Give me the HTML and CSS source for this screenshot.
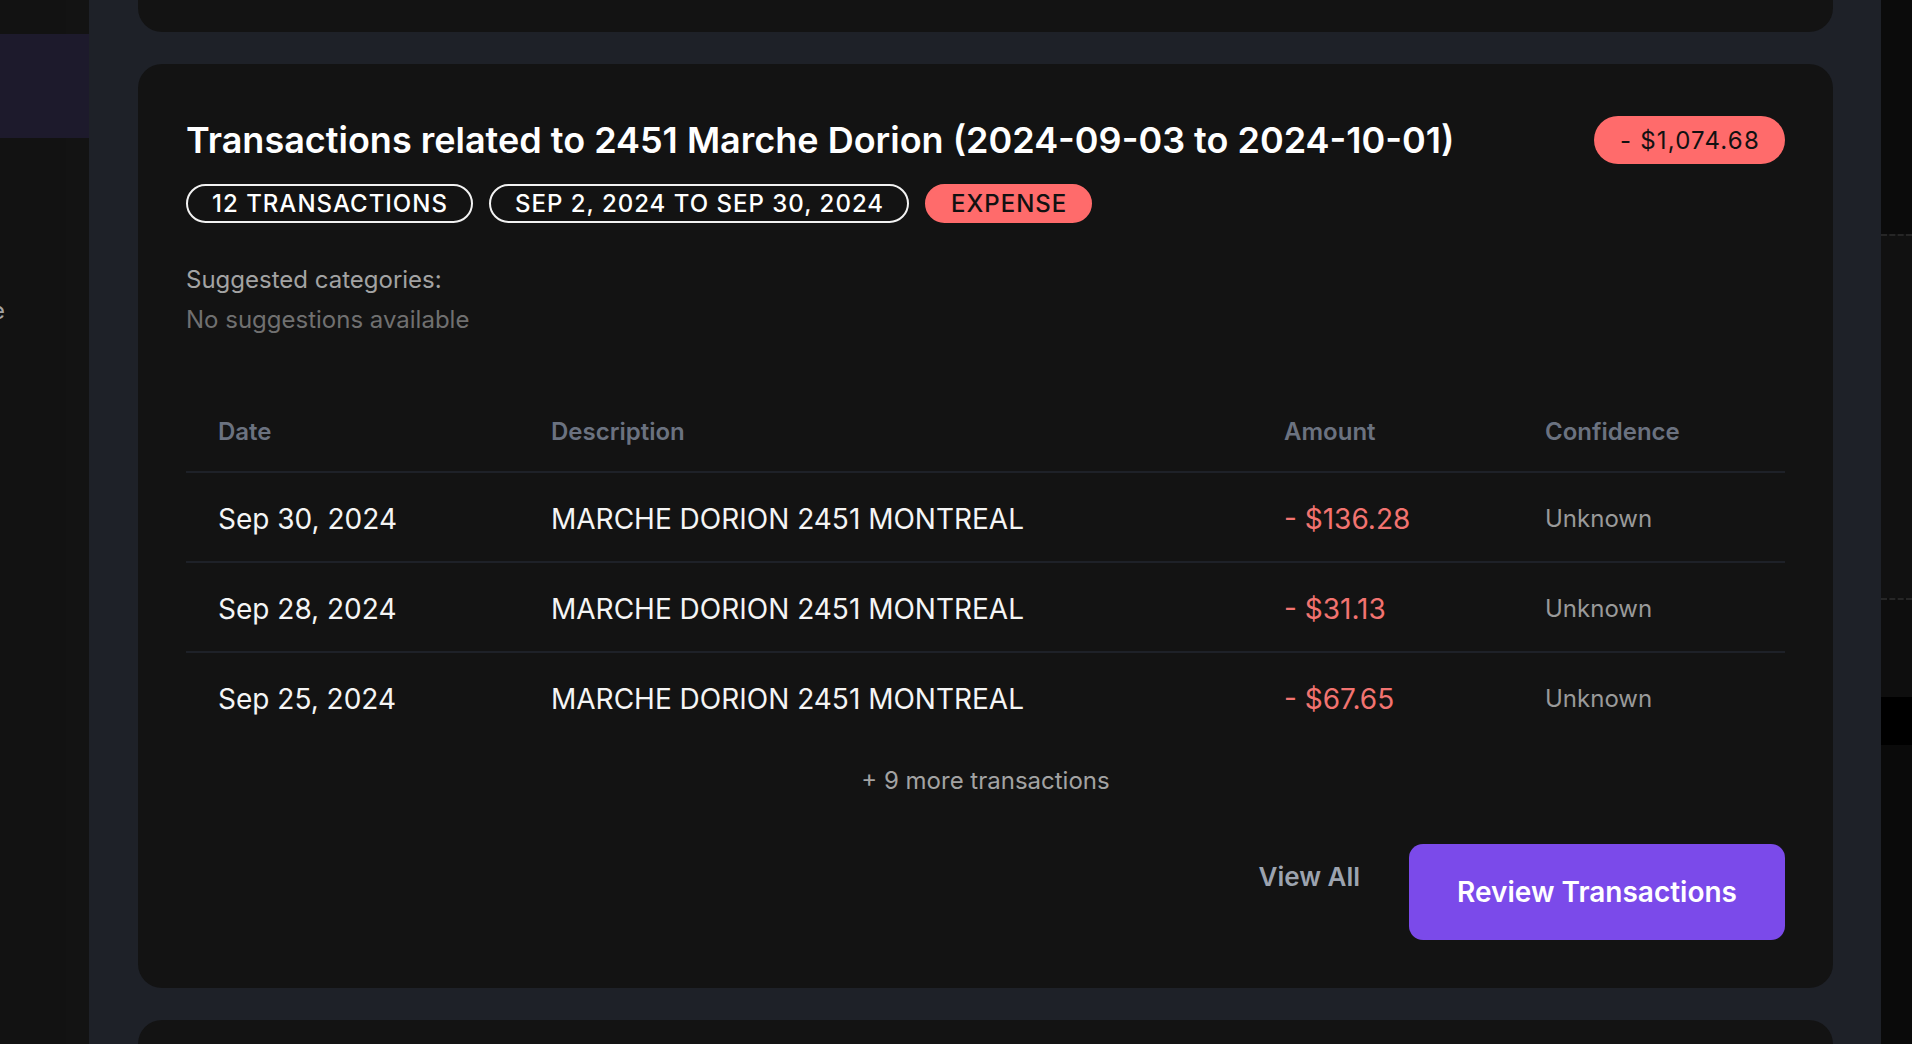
FILE: index.html
```html
<!DOCTYPE html>
<html lang="en">
<head>
<meta charset="utf-8">
<title>Transactions</title>
<link rel="stylesheet" href="styles.css">
</head>
<body>
<div class="app">
  <aside class="sidebar">
    <div class="nav-top"></div>
    <div class="nav-active"></div>
    <div class="nav-item"><span class="nav-label">Rule</span></div>
  </aside>
  <main class="main">
    <div class="feed">
      <section class="card card-prev"></section>
      <section class="card">
        <div class="card-head">
          <h2 class="card-title">Transactions related to 2451 Marche Dorion (2024-09-03 to 2024-10-01)</h2>
          <span class="total-pill">- $1,074.68</span>
        </div>
        <div class="chips">
          <span class="chip">12 Transactions</span>
          <span class="chip">Sep 2, 2024 to Sep 30, 2024</span>
          <span class="chip chip-expense">Expense</span>
        </div>
        <div class="suggest">
          <div class="suggest-label">Suggested categories:</div>
          <div class="suggest-empty">No suggestions available</div>
        </div>
        <table class="tx-table">
          <colgroup>
            <col class="c-date"><col class="c-desc"><col class="c-amt"><col class="c-conf">
          </colgroup>
          <thead>
            <tr><th>Date</th><th>Description</th><th>Amount</th><th>Confidence</th></tr>
          </thead>
          <tbody>
            <tr><td>Sep 30, 2024</td><td>MARCHE DORION 2451 MONTREAL</td><td class="amount">- $136.28</td><td class="conf">Unknown</td></tr>
            <tr><td>Sep 28, 2024</td><td>MARCHE DORION 2451 MONTREAL</td><td class="amount">- $31.13</td><td class="conf">Unknown</td></tr>
            <tr><td>Sep 25, 2024</td><td>MARCHE DORION 2451 MONTREAL</td><td class="amount">- $67.65</td><td class="conf">Unknown</td></tr>
          </tbody>
        </table>
        <div class="more">+ 9 more transactions</div>
        <div class="actions">
          <button class="btn-link">View All</button>
          <button class="btn-primary">Review Transactions</button>
        </div>
      </section>
      <section class="card card-next"></section>
    </div>
  </main>
  <aside class="rail">
    <div class="rail-a"></div>
    <div class="rail-b"></div>
    <div class="rail-c"></div>
    <div class="rail-d"></div>
    <div class="rail-e"></div>
  </aside>
</div>
</body>
</html>
```

FILE: styles.css
```css
* { box-sizing: border-box; }

html, body {
  margin: 0;
  padding: 0;
  height: 100%;
  overflow: hidden;
  background: #121212;
  font-family: Inter, "Noto Sans", "Liberation Sans", sans-serif;
}

.app {
  display: flex;
  height: 1044px;
  overflow: hidden;
}

/* sidebar */
.sidebar {
  width: 89px;
  flex: none;
  display: flex;
  flex-direction: column;
  overflow: hidden;
  background: linear-gradient(to right, #121212 66px, #131313 66px);
}
.nav-top { height: 34px; }
.nav-active { height: 104px; background: #1d1a2c; }
.nav-item {
  margin-top: 155px;
  width: 5px;
  display: flex;
  justify-content: flex-end;
  white-space: nowrap;
  font-size: 24px;
  line-height: 36px;
  color: #a3a3a3;
}

/* main */
.main {
  flex: 1;
  background: #1e2128;
  padding: 0 48px 0 49px;
  overflow: hidden;
}
.feed {
  display: flex;
  flex-direction: column;
  gap: 32px;
  margin-top: -168px;
}
.card {
  background: #131313;
  border-radius: 24px;
  padding: 52px 48px 48px;
}
.card-prev { height: 200px; }
.card-next { height: 300px; }

.card-head {
  display: flex;
  justify-content: space-between;
  align-items: center;
}
.card-title {
  margin: 0;
  font-size: 36px;
  line-height: 48px;
  font-weight: 600;
  color: #ffffff;
  letter-spacing: 0;
}
.total-pill {
  display: flex;
  align-items: center;
  height: 48px;
  padding: 0 25px 0 26px;
  border-radius: 999px;
  background: #ff6b6b;
  color: #111111;
  font-size: 24px;
  letter-spacing: 1.2px;
}

.chips {
  display: flex;
  gap: 16px;
  margin-top: 20px;
}
.chip {
  display: flex;
  align-items: center;
  height: 39px;
  padding: 0 23px 0 24px;
  border: 2px solid #f2f2f2;
  border-radius: 999px;
  color: #ffffff;
  font-size: 24px;
  font-weight: 500;
  letter-spacing: 1px;
  text-transform: uppercase;
}
.chip-expense {
  background: #ff6b6b;
  border-color: #ff6b6b;
  color: #111111;
}

.suggest { margin-top: 39px; }
.suggest-label {
  font-size: 24px;
  line-height: 36px;
  color: #a3a3a3;
}
.suggest-empty {
  margin-top: 4px;
  font-size: 24px;
  line-height: 36px;
  color: #707070;
}

/* table */
.tx-table {
  margin-top: 51px;
  width: 100%;
  border-collapse: collapse;
  table-layout: fixed;
}
.c-date { width: 333px; }
.c-desc { width: 733px; }
.c-amt { width: 261px; }
.c-conf { width: 272px; }
.tx-table th {
  text-align: left;
  padding: 25px 32px 21px;
  font-size: 24px;
  line-height: 36px;
  font-weight: 600;
  color: #6b7280;
  border-bottom: 2px solid #1e2128;
}
.tx-table td {
  padding: 25px 32px 21px;
  font-size: 28px;
  line-height: 42px;
  color: #f5f5f5;
  border-bottom: 2px solid #1e2128;
  white-space: nowrap;
}
.tx-table tbody tr:last-child td { border-bottom: none; }
.tx-table td.amount { color: #f27370; }
.tx-table td.conf {
  font-size: 24px;
  color: #9a9a9a;
}

.more {
  margin-top: 22px;
  text-align: center;
  font-size: 24px;
  line-height: 36px;
  color: #a3a3a3;
}

.actions {
  display: flex;
  justify-content: flex-end;
  align-items: flex-start;
  gap: 49px;
  margin-top: 45px;
}
.btn-link {
  background: none;
  border: none;
  padding: 15px 0 0;
  font-family: inherit;
  font-size: 26px;
  line-height: 36px;
  font-weight: 600;
  color: #9ca3af;
}
.btn-primary {
  height: 96px;
  padding: 0 48px;
  border: none;
  border-radius: 14px;
  background: #7b4aea;
  color: #ffffff;
  font-family: inherit;
  font-size: 28px;
  font-weight: 600;
}

/* right rail */
.rail {
  width: 31px;
  flex: none;
  display: flex;
  flex-direction: column;
}
.rail-a { height: 234px; background: #0b0b0b; }
.rail-b { height: 364px; background: #111111; border-top: 2px dashed #262626; }
.rail-c { height: 99px; background: #0e0e0e; border-top: 2px dashed #262626; }
.rail-d { height: 48px; background: #000000; }
.rail-e { flex: 1; background: #0a0a0a; }
```
